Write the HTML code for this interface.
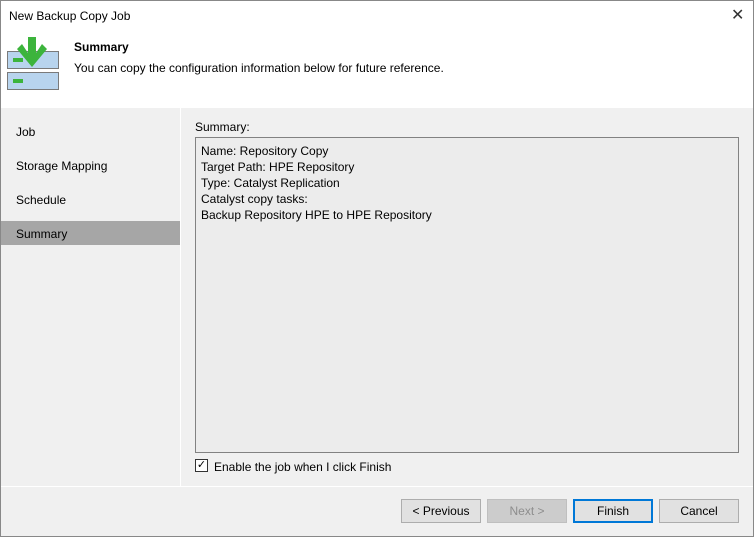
<!DOCTYPE html><html><head><style>
body{margin:0;width:754px;height:537px;overflow:hidden;font-family:"Liberation Sans",sans-serif;font-size:12px;color:#000;background:#f0f0f0;position:relative}
.a{position:absolute}
.win{left:0;top:0;width:752px;height:535px;border:1px solid #888;background:#f0f0f0}
.btn{position:absolute;top:499px;width:78px;height:22px;border:1px solid #adadad;background:#e1e1e1;text-align:center;line-height:22px;font-size:12px}
</style></head><body>
<div class="a win"></div>
<div class="a" style="left:1px;top:1px;width:752px;height:107px;background:#fff"></div>
<div class="a" style="left:9px;top:9px;font-size:12px">New Backup Copy Job</div>
<div class="a" style="left:731px;top:5px;font-size:16px;color:#333">✕</div>
<svg class="a" style="left:0;top:30px" width="66" height="62">
<rect x="7.5" y="21.5" width="51" height="17" fill="#b8d4ee" stroke="#7a7a7a"/>
<rect x="7.5" y="42.5" width="51" height="17" fill="#b8d4ee" stroke="#7a7a7a"/>
<rect x="13" y="28" width="10" height="4" fill="#3cb43c"/>
<rect x="13" y="49" width="10" height="4" fill="#3cb43c"/>
<polygon points="28,7 36,7 36,23 42,14 47,19 32,37 17,19 22,14 28,23" fill="#3cb43c"/>
</svg>
<div class="a" style="left:74px;top:40px;font-weight:bold">Summary</div>
<div class="a" style="left:74px;top:61px">You can copy the configuration information below for future reference.</div>
<div class="a" style="left:180px;top:108px;width:1px;height:378px;background:#fff"></div>
<div class="a" style="left:1px;top:486px;width:752px;height:1px;background:#fff"></div>
<div class="a" style="left:16px;top:125px">Job</div>
<div class="a" style="left:16px;top:159px">Storage Mapping</div>
<div class="a" style="left:16px;top:193px">Schedule</div>
<div class="a" style="left:1px;top:221px;width:179px;height:24px;background:#a6a6a6"></div>
<div class="a" style="left:16px;top:227px">Summary</div>
<div class="a" style="left:195px;top:120px">Summary:</div>
<div class="a" style="left:195px;top:137px;width:542px;height:314px;border:1px solid #828282;background:#ececec"></div>
<div class="a" style="left:201px;top:143px;line-height:16px">Name: Repository Copy<br>Target Path: HPE Repository<br>Type: Catalyst Replication<br>Catalyst copy tasks:<br>Backup Repository HPE to HPE Repository</div>
<div class="a" style="left:195px;top:459px;width:11px;height:11px;border:1px solid #333;background:#fff;font-size:11px;line-height:11px;text-align:center">✓</div>
<div class="a" style="left:214px;top:460px">Enable the job when I click Finish</div>
<div class="btn" style="left:401px">&lt; Previous</div>
<div class="btn" style="left:487px;background:#cccccc;border-color:#bfbfbf;color:#8d8d8d">Next &gt;</div>
<div class="btn" style="left:573px;width:76px;height:20px;line-height:20px;border:2px solid #0078d7">Finish</div>
<div class="btn" style="left:659px">Cancel</div>
</body></html>
